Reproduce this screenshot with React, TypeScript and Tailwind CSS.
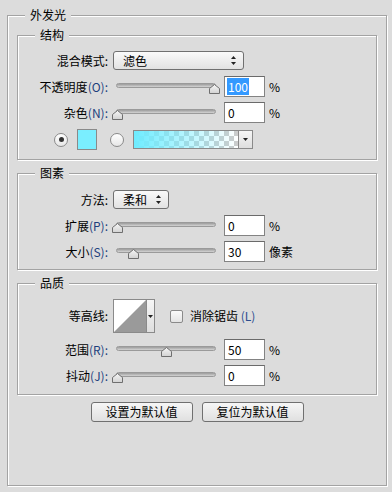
import React from "react";

const BG = "bg-[#dcdcdc]";

function Group({ title, className, children }: { title: string; className: string; children: React.ReactNode }) {
  return (
    <div className={`relative ml-[9px] w-[360px] border border-[#a3a3a3] shadow-[inset_1px_1px_0_#fff,1px_1px_0_#fff] ${className}`}>
      <span className="absolute -top-[9px] left-[17px] px-[5px] bg-[#dcdcdc] text-[12px] leading-[16px]">{title}</span>
      {children}
    </div>
  );
}

function Label({ text, key2 }: { text: string; key2?: string }) {
  return (
    <div className="w-[90px] text-right whitespace-nowrap text-[12px] leading-[16px]">
      {text}
      {key2 ? <span className="text-[#1d3f7d]">{key2}</span> : null}
      <span className={key2 ? "text-[#1d3f7d]" : ""}>:</span>
    </div>
  );
}

function Slider({ pct }: { pct: number }) {
  const left = Math.round(pct * 97) - 4;
  return (
    <div className="relative w-[100px] h-[12px]">
      <div className="absolute top-[2px] left-0 w-full h-[5px] rounded-full border border-[#9a9a9a] bg-linear-to-b from-[#9c9c9c] to-[#d4d4d4]" />
      <svg className="absolute top-[3px]" style={{ left }} width="11" height="10" viewBox="0 0 11 10">
        <defs>
          <linearGradient id="tg" x1="0" y1="0" x2="0" y2="1">
            <stop offset="0" stopColor="#f6f6f6" />
            <stop offset="1" stopColor="#d2d2d2" />
          </linearGradient>
        </defs>
        <path d="M0.5 4.5 L5.5 0.5 L10.5 4.5 L10.5 9.5 L0.5 9.5 Z" fill="url(#tg)" stroke="#6f6f6f" strokeWidth="1" />
      </svg>
    </div>
  );
}

function Input({ value, selected }: { value: string; selected?: boolean }) {
  return (
    <div className="w-[41px] h-[21px] bg-white border border-[#838383] border-t-[#6a6a6a] pl-[2px] text-[12px] leading-[19px]">
      {selected ? <span className="bg-[#3399ff] text-white px-[1px]">{value}</span> : <span className="px-[1px]">{value}</span>}
    </div>
  );
}

function UpDown() {
  return (
    <svg width="5" height="9" viewBox="0 0 5 9">
      <path d="M0 3 L2.5 0 L5 3 Z" fill="#222" />
      <path d="M0 6 L2.5 9 L5 6 Z" fill="#222" />
    </svg>
  );
}

function Select({ text, w }: { text: string; w: string }) {
  return (
    <div className={`ml-[5px] flex items-center justify-between h-[19px] rounded-[3px] border border-[#707070] bg-linear-to-b from-[#fafafa] to-[#e2e2e2] pl-[9px] pr-[7px] text-[12px] leading-[16px] ${w}`}>
      <span>{text}</span>
      <UpDown />
    </div>
  );
}

function SliderRow({ label, k, pct, value, unit, mt, selected }: { label: string; k: string; pct: number; value: string; unit: string; mt: string; selected?: boolean }) {
  return (
    <div className={`flex items-center h-[21px] ${mt}`}>
      <Label text={label} key2={k} />
      <div className="ml-[8px]">
        <Slider pct={pct} />
      </div>
      <div className="ml-[8px]">
        <Input value={value} selected={selected} />
      </div>
      <span className="ml-[4px] text-[12px] leading-[16px]">{unit}</span>
    </div>
  );
}

function Radio({ checked }: { checked?: boolean }) {
  return (
    <div className="w-[14px] h-[14px] rounded-full border border-[#8a8a8a] bg-linear-to-b from-[#ffffff] to-[#e6e6e6] flex items-center justify-center">
      {checked ? <div className="w-[5px] h-[5px] rounded-full bg-[#333]" /> : null}
    </div>
  );
}

function Btn({ text }: { text: string }) {
  return (
    <div className="w-[102px] h-[20px] rounded-[3px] border border-[#707070] bg-linear-to-b from-[#f6f6f6] to-[#e0e0e0] text-center text-[12px] leading-[18px]">
      {text}
    </div>
  );
}

export default function App() {
  return (
    <div className={`w-[392px] h-[492px] ${BG} pt-[15px] pl-[7px] text-black font-['Noto_Sans_CJK_SC','Noto_Sans',sans-serif]`}>
      <div className="relative w-[380px] h-[471px] border border-[#a3a3a3] shadow-[inset_1px_1px_0_#fff,1px_1px_0_#fff] pt-[19px]">
        <span className="absolute -top-[9px] left-[17px] px-[5px] bg-[#dcdcdc] text-[12px] leading-[16px]">外发光</span>

        <Group title="结构" className="h-[125px]">
          <div className="flex items-center h-[19px] mt-[15px]">
            <Label text="混合模式" />
            <Select text="滤色" w="w-[131px]" />
          </div>
          <SliderRow label="不透明度" k="(O)" pct={1} value="100" unit="%" mt="mt-[6px]" selected />
          <SliderRow label="杂色" k="(N)" pct={0} value="0" unit="%" mt="mt-[5px]" />
          <div className="flex items-center h-[21px] mt-[6px]">
            <div className="ml-[36px]">
              <Radio checked />
            </div>
            <div className="ml-[9px] w-[20px] h-[21px] bg-[#7aeeff] border border-[#8a8a8a]" />
            <div className="ml-[13px]">
              <Radio />
            </div>
            <div className="ml-[9px] flex h-[19px] border border-[#8a8a8a]">
              <svg width="104" height="17" viewBox="0 0 104 17" className="block">
                <defs>
                  <pattern id="chk" width="10" height="10" patternUnits="userSpaceOnUse">
                    <rect width="10" height="10" fill="#ffffff" />
                    <rect width="5" height="5" fill="#cccccc" />
                    <rect x="5" y="5" width="5" height="5" fill="#cccccc" />
                  </pattern>
                  <linearGradient id="cg" x1="0" y1="0" x2="1" y2="0">
                    <stop offset="0" stopColor="#6eecff" stopOpacity="1" />
                    <stop offset="1" stopColor="#6eecff" stopOpacity="0" />
                  </linearGradient>
                </defs>
                <rect width="104" height="17" fill="url(#chk)" />
                <rect width="104" height="17" fill="url(#cg)" />
              </svg>
              <div className="w-[14px] h-[17px] border-l border-[#8a8a8a] bg-linear-to-b from-[#f6f6f6] to-[#dedede] flex items-center justify-center">
                <svg width="5" height="3" viewBox="0 0 5 3">
                  <path d="M0 0 L5 0 L2.5 3 Z" fill="#222" />
                </svg>
              </div>
            </div>
          </div>
        </Group>

        <Group title="图素" className="h-[97px] mt-[13px]">
          <div className="flex items-center h-[19px] mt-[16px]">
            <Label text="方法" />
            <Select text="柔和" w="w-[56px]" />
          </div>
          <SliderRow label="扩展" k="(P)" pct={0} value="0" unit="%" mt="mt-[6px]" />
          <SliderRow label="大小" k="(S)" pct={0.17} value="30" unit="像素" mt="mt-[5px]" />
        </Group>

        <Group title="品质" className="h-[112px] mt-[13px]">
          <div className="flex items-center h-[34px] mt-[15px]">
            <Label text="等高线" />
            <div className="ml-[5px] flex h-[34px] border border-[#8a8a8a] bg-white">
              <svg width="32" height="32" viewBox="0 0 32 32" className="block">
                <rect width="32" height="32" fill="#ffffff" />
                <path d="M0 32 L32 0 L32 32 Z" fill="#9a9a9a" />
              </svg>
              <div className="w-[8px] h-[32px] border-l border-[#8a8a8a] bg-linear-to-b from-[#f6f6f6] to-[#dedede] flex items-center justify-center">
                <svg width="5" height="3" viewBox="0 0 5 3">
                  <path d="M0 0 L5 0 L2.5 3 Z" fill="#222" />
                </svg>
              </div>
            </div>
            <div className="ml-[15px] w-[13px] h-[13px] rounded-[2px] border border-[#8a8a8a] bg-linear-to-b from-[#fafafa] to-[#e4e4e4]" />
            <span className="ml-[7px] text-[12px] leading-[16px]">
              消除锯齿 <span className="text-[#2a4d8f]">(L)</span>
            </span>
          </div>
          <SliderRow label="范围" k="(R)" pct={0.5} value="50" unit="%" mt="mt-[6px]" />
          <SliderRow label="抖动" k="(J)" pct={0} value="0" unit="%" mt="mt-[5px]" />
        </Group>

        <div className="flex justify-center gap-[9px] mt-[7px]">
          <Btn text="设置为默认值" />
          <Btn text="复位为默认值" />
        </div>
      </div>
    </div>
  );
}
